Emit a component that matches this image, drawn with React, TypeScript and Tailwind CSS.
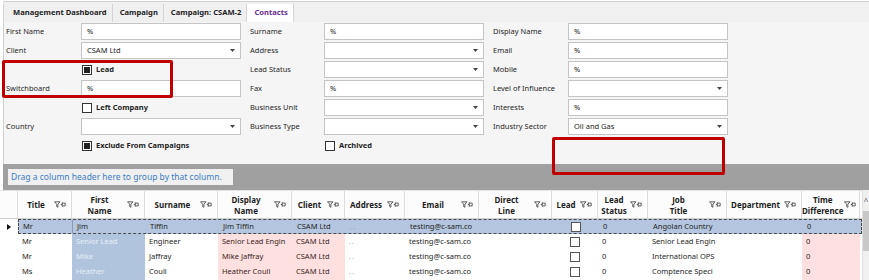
import React from 'react';

const font = "font-['Noto_Sans','Open_Sans',sans-serif]";

const Caret = () => (
  <svg width="5" height="3" viewBox="0 0 5 3" className="shrink-0">
    <path d="M0 0H5L2.5 3Z" fill="#444" />
  </svg>
);

const FilterPin = () => (
  <svg width="12" height="7" viewBox="0 0 12 7" className="shrink-0">
    <path d="M0.5 0.8H6L3.9 3.2V6.3L2.7 5.6V3.2Z" fill="none" stroke="#3a3a3a" strokeWidth="0.8" />
    <path d="M6.8 3.5H8.2M8.2 1.4V5.6M8.2 2.1H11.2V4.9H8.2" fill="none" stroke="#3a3a3a" strokeWidth="0.8" />
  </svg>
);

type Field =
  | { kind: 'text'; label: string; value?: string }
  | { kind: 'select'; label: string; value?: string }
  | { kind: 'check'; label: string; checked: boolean };

const col1: Field[] = [
  { kind: 'text', label: 'First Name', value: '%' },
  { kind: 'select', label: 'Client', value: 'CSAM Ltd' },
  { kind: 'check', label: 'Lead', checked: true },
  { kind: 'text', label: 'Switchboard', value: '%' },
  { kind: 'check', label: 'Left Company', checked: false },
  { kind: 'select', label: 'Country' },
  { kind: 'check', label: 'Exclude From Campaigns', checked: true },
];

const col2: Field[] = [
  { kind: 'text', label: 'Surname', value: '%' },
  { kind: 'select', label: 'Address' },
  { kind: 'select', label: 'Lead Status' },
  { kind: 'text', label: 'Fax', value: '%' },
  { kind: 'select', label: 'Business Unit' },
  { kind: 'select', label: 'Business Type' },
  { kind: 'check', label: 'Archived', checked: false },
];

const col3: Field[] = [
  { kind: 'text', label: 'Display Name', value: '%' },
  { kind: 'text', label: 'Email', value: '%' },
  { kind: 'text', label: 'Mobile', value: '%' },
  { kind: 'select', label: 'Level of Influence' },
  { kind: 'text', label: 'Interests', value: '%' },
  { kind: 'select', label: 'Industry Sector', value: 'Oil and Gas' },
];

const Checkbox = ({ checked }: { checked: boolean }) => (
  <span className="w-[10px] h-[10px] border border-[#333] bg-white flex items-center justify-center shrink-0">
    {checked && <span className="w-[6px] h-[6px] bg-[#222]" />}
  </span>
);

const FormColumn = ({ fields, labelW }: { fields: Field[]; labelW: string }) => (
  <div className="flex flex-col gap-[2px]">
    {fields.map((f) => (
      <div key={f.label} className="flex items-center h-[17px]">
        {f.kind === 'check' ? (
          <>
            <span className={labelW} />
            <span className="flex items-center gap-[4px] pl-[1px]">
              <Checkbox checked={f.checked} />
              <span className="font-bold text-[#1e1e1e]">{f.label}</span>
            </span>
          </>
        ) : (
          <>
            <span className={`${labelW} text-[#262626]`}>{f.label}</span>
            <span className="w-[160px] h-[17px] bg-white border border-[#c4c4c4] flex items-center justify-between pl-[5px] pr-[5px] text-[#222]">
              <span>{f.value ?? ''}</span>
              {f.kind === 'select' && <Caret />}
            </span>
          </>
        )}
      </div>
    ))}
  </div>
);

const columns = [
  { key: 'title', label: ['Title'], w: 'w-[54px]' },
  { key: 'first', label: ['First', 'Name'], w: 'w-[73px]' },
  { key: 'surname', label: ['Surname'], w: 'w-[73px]' },
  { key: 'display', label: ['Display', 'Name'], w: 'w-[74px]' },
  { key: 'client', label: ['Client'], w: 'w-[53px]' },
  { key: 'address', label: ['Address'], w: 'w-[60px]' },
  { key: 'email', label: ['Email'], w: 'w-[74px]' },
  { key: 'direct', label: ['Direct', 'Line'], w: 'w-[73px]' },
  { key: 'lead', label: ['Lead'], w: 'w-[46px]' },
  { key: 'status', label: ['Lead', 'Status'], w: 'w-[50px]' },
  { key: 'job', label: ['Job', 'Title'], w: 'w-[79px]' },
  { key: 'dept', label: ['Department'], w: 'w-[75px]' },
  { key: 'time', label: ['Time', 'Difference'], w: 'w-[58px]' },
];

type Row = Record<string, string>;

const rows: Row[] = [
  { title: 'Mr', first: 'Jim', surname: 'Tiffin', display: 'Jim Tiffin', client: 'CSAM Ltd', address: ', ,', email: 'testing@c-sam.co', direct: '', status: '0', job: 'Angolan Country', dept: '', time: '0' },
  { title: 'Mr', first: 'Senior Lead', surname: 'Engineer', display: 'Senior Lead Engin', client: 'CSAM Ltd', address: ', ,', email: 'testing@c-sam.co', direct: '', status: '0', job: 'Senior Lead Engin', dept: '', time: '0' },
  { title: 'Mr', first: 'Mike', surname: 'Jaffray', display: 'Mike Jaffray', client: 'CSAM Ltd', address: ', ,', email: 'testing@c-sam.co', direct: '', status: '0', job: 'International OPS', dept: '', time: '0' },
  { title: 'Ms', first: 'Heather', surname: 'Coull', display: 'Heather Coull', client: 'CSAM Ltd', address: ', ,', email: 'testing@c-sam.co', direct: '', status: '0', job: 'Comptence Speci', dept: '', time: '0' },
  { title: '', first: '', surname: '', display: '', client: '', address: '', email: '', direct: '', status: '', job: '', dept: '', time: '' },
];

function cellTint(key: string, selected: boolean) {
  if (selected) return 'text-[#1e1e1e]';
  if (key === 'first') return 'bg-[#b0c4de] text-[#e8eef6]';
  if (key === 'display' || key === 'client') return 'bg-[#ffe0e0] text-[#3a1f24]';
  if (key === 'time') return 'bg-[#ffe0e0] text-[#1e1e1e]';
  return 'text-[#1e1e1e]';
}

export default function App() {
  const tabs = ['Management Dashboard', 'Campaign', 'Campaign: CSAM-2', 'Contacts'];

  return (
    <div className={`relative w-[869px] h-[280px] overflow-hidden bg-white text-[7.5px] leading-none ${font}`}>
      {/* tabs */}
      <div className="ml-[3px] h-[21px] bg-[#f0f0f0] border-t border-[#cfcfcf] mt-[1px] flex items-end">
        {tabs.map((t) => {
          const active = t === 'Contacts';
          return (
            <div
              key={t}
              className={`h-[18px] pr-[5px] flex items-center font-bold text-[7.6px] border-r border-[#d4d4d4] ${
                active ? 'bg-white text-[#6a2d96]' : 'bg-[#f0f0f0] text-[#1e1e1e]'
              } ${t === 'Management Dashboard' ? 'border-l pl-[9px]' : 'pl-[7px]'}`}
            >
              {t}
            </div>
          );
        })}
      </div>

      {/* filter form */}
      <div className="ml-[3px] h-[142px] bg-[#f5f5f5] border-l border-[#d0d0d0] pt-[1px] pl-[2px] flex gap-[9px]">
        <FormColumn fields={col1} labelW="w-[75px]" />
        <FormColumn fields={col2} labelW="w-[74px]" />
        <FormColumn fields={col3} labelW="w-[75px]" />
      </div>

      {/* group panel */}
      <div className="ml-[3px] h-[26px] bg-[#a0a0a0] flex items-center pl-[5px]">
        <div className="h-[16px] w-[225px] bg-[#f0f0f0] flex items-center pl-[3px] text-[8.5px] text-[#3d7cc4]">
          Drag a column header here to group by that column.
        </div>
      </div>

      {/* grid */}
      <div className="flex">
        <div className="flex-1">
          <div className="flex h-[29px] bg-[#fcfcfc] border-b border-[#d0d0d0] border-t border-t-[#e4e4e4]">
            <div className="w-[18px] border-r border-[#dcdcdc]" />
            {columns.map((c) => (
              <div key={c.key} className={`${c.w} shrink-0 flex items-center border-r border-[#dcdcdc] pr-[5px]`}>
                <div className="flex-1 flex flex-col items-center font-bold text-[8px] leading-[11px] text-[#1e1e1e]">
                  {c.label.map((l) => (
                    <span key={l}>{l}</span>
                  ))}
                </div>
                <FilterPin />
              </div>
            ))}
          </div>

          {rows.map((r, i) => {
            const selected = i === 0;
            return (
              <div key={i} className="flex h-[15px]">
                <div className="w-[18px] flex items-center justify-center">
                  {selected && (
                    <svg width="4" height="6" viewBox="0 0 4 6">
                      <path d="M0 0L4 3L0 6Z" fill="#111" />
                    </svg>
                  )}
                </div>
                <div
                  className={`flex ${selected ? 'bg-[#b4c6df] border border-dashed border-[#4a4a4a]' : ''}`}
                >
                  {columns.map((c, ci) => (
                    <div
                      key={c.key}
                      className={`${c.w} shrink-0 flex items-center overflow-hidden whitespace-nowrap ${
                        c.key === 'lead' ? 'justify-center' : 'pl-[4px]'
                      } ${cellTint(c.key, selected)} ${selected && ci === 0 ? 'border-r border-[#8a9ab2]' : ''}`}
                    >
                      {c.key === 'lead' ? (
                        r.title && <span className="w-[10px] h-[10px] bg-white border border-[#555]" />
                      ) : c.key === 'address' ? (
                        <span className="text-[#8a8a8a] text-[6px]">{r.address}</span>
                      ) : (
                        r[c.key]
                      )}
                    </div>
                  ))}
                </div>
              </div>
            );
          })}
        </div>

        {/* scrollbar */}
        <div className="w-[9px] flex flex-col bg-[#f0f0f0] border-l border-[#e0e0e0]">
          <div className="h-[21px] flex items-center justify-center text-[8px] text-[#555]">^</div>
          <div className="h-[40px] bg-[#c8c8c8]" />
        </div>
      </div>

      {/* annotation boxes */}
      <div className="absolute left-[2px] top-[60px] w-[171px] h-[38px] border-[3px] border-[#c00000] rounded-[2px]" />
      <div className="absolute left-[552px] top-[137px] w-[173px] h-[38px] border-[3px] border-[#c00000] rounded-[2px]" />
    </div>
  );
}
